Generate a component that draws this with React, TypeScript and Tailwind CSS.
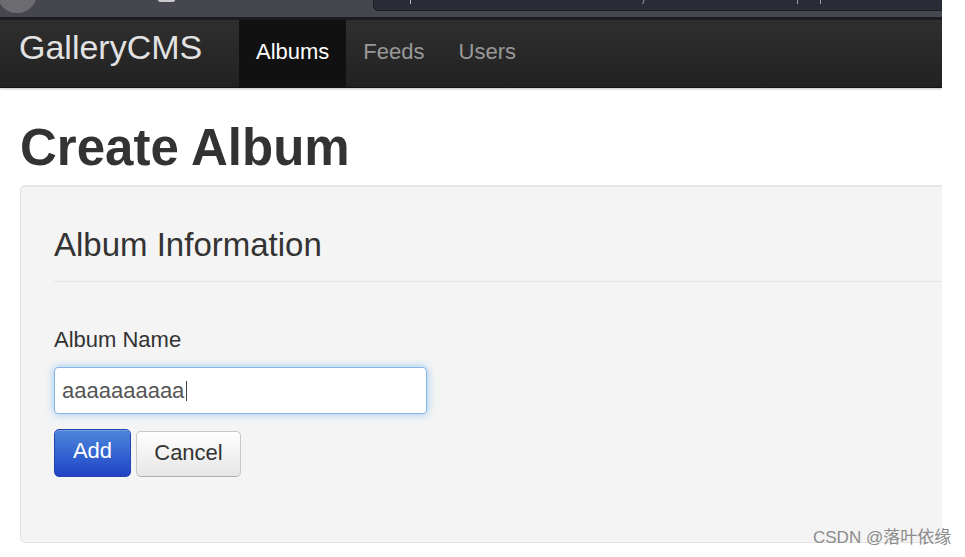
import React from "react";

const navItems = [
  { label: "Albums", active: true },
  { label: "Feeds", active: false },
  { label: "Users", active: false },
];

const BrowserStrip = () => (
  <div className="flex flex-col">
    <div className="flex h-[17px] items-start overflow-hidden bg-[#46464e]">
      <div className="-ml-[3px] -mt-[27px] h-[40px] w-[40px] shrink-0 rounded-full bg-[#6b6b70]" />
      <div className="ml-[121px] mt-0 h-[2px] w-[17px] shrink-0 rounded-b bg-[#c9c9cc]" />
      <div className="relative -mt-[5px] ml-[198px] h-[16px] w-[620px] shrink-0 rounded-[5px] border border-[#1c1e26] bg-[#292c37]">
        <div className="absolute left-[36px] top-0 h-[8px] w-px bg-[#b8bac2]" />
        <div className="absolute left-[269px] top-[3px] h-[5px] w-px rotate-[20deg] bg-[#9a9ca6]" />
        <div className="absolute left-[423px] top-[3px] h-[5px] w-px bg-[#9a9ca6]" />
        <div className="absolute left-[446px] top-[3px] h-[5px] w-px bg-[#9a9ca6]" />
      </div>
    </div>
    <div className="h-[3px] bg-[#1d1d21]" />
  </div>
);

const NavBar = () => (
  <nav className="flex h-[68px] items-stretch border-b border-[#141414] bg-linear-to-b from-[#2f2f2f] to-[#222] shadow-[0_1px_2px_rgba(0,0,0,0.25)]">
    <div className="flex w-[239px] shrink-0 items-center pb-[13px] pl-[19px] text-[34px] text-[#e2e2e2]">
      GalleryCMS
    </div>
    {navItems.map((item) => (
      <a
        key={item.label}
        href="#"
        className={
          item.active
            ? "flex items-center bg-[#111] px-[17px] pb-[5px] text-[22px] text-white"
            : "flex items-center px-[17px] pb-[5px] text-[22px] text-[#999]"
        }
      >
        {item.label}
      </a>
    ))}
  </nav>
);

export default function App() {
  return (
    <div className="relative h-[557px] w-[965px] overflow-hidden bg-white font-['Liberation_Sans',Arial,sans-serif]">
      <div className="h-full w-[942px] overflow-hidden">
        <BrowserStrip />
        <NavBar />

        <main className="pl-[20px] pt-[30px]">
          <h1 className="mb-[7px] text-[51px] font-bold leading-[60px] text-[#333]">
            Create Album
          </h1>

          <div className="h-[358px] w-[960px] rounded-[5px] border border-[#e3e3e3] bg-[#f4f4f4] pl-[33px] pr-[33px] pt-[33px] shadow-[inset_0_1px_1px_rgba(0,0,0,0.05)]">
            <div className="border-b border-[#e5e5e5] pb-[10px] text-[33px] leading-[52px] text-[#333]">
              Album Information
            </div>

            <div className="mt-[44px] text-[22px] leading-[28px] text-[#333]">Album Name</div>

            <div className="mt-[13px] flex h-[47px] w-[373px] items-center rounded-[4px] border border-[#87b5e8] bg-white pl-[7px] text-[22px] text-[#555] shadow-[0_0_9px_rgba(82,168,236,0.6)]">
              aaaaaaaaaa
              <span className="ml-[2px] inline-block h-[20px] w-px bg-[#444] align-[-6px]" />
            </div>

            <div className="mt-[15px] flex items-end gap-[5px]">
              <button className="flex h-[48px] w-[77px] items-center justify-center rounded-[5px] border border-[#2544b0] bg-linear-to-b from-[#4f86db] to-[#2242c6] pb-[6px] text-[22px] text-white shadow-[inset_0_1px_0_rgba(255,255,255,0.2)]">
                Add
              </button>
              <button className="flex h-[46px] w-[105px] items-center justify-center rounded-[5px] border border-[#c8c8c8] border-b-[#b0b0b0] bg-linear-to-b from-white to-[#e6e6e6] pb-[3px] text-[22px] text-[#333]">
                Cancel
              </button>
            </div>
          </div>
        </main>
      </div>

      <div className="absolute left-[813px] top-[528px] text-[17px] leading-[20px] text-[#8c8c8c] font-['Liberation_Sans','Noto_Sans_CJK_SC',sans-serif]">
        CSDN @落叶依缘
      </div>
    </div>
  );
}
